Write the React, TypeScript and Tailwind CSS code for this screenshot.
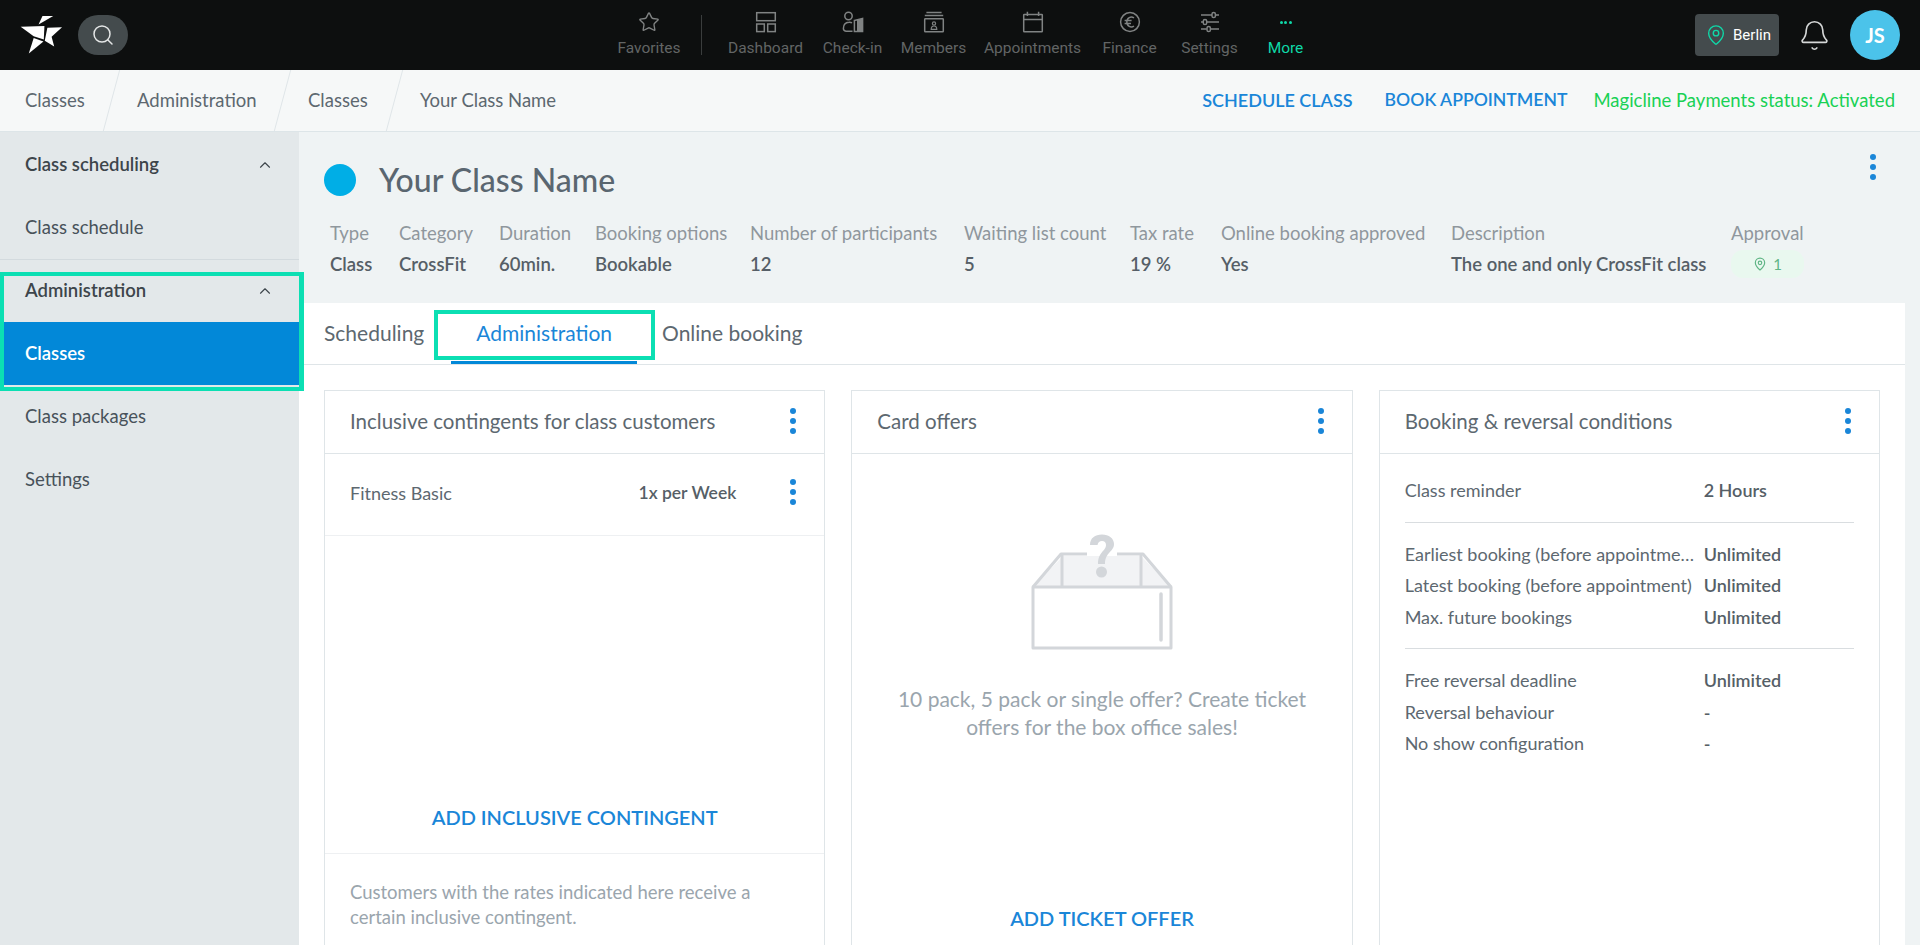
import { ChevronUp, Search, Star, Bell, MapPin } from "lucide-react";

const SANS = "font-['Lato','Noto_Sans',sans-serif]";

function Logo() {
  return (
    <svg width="43" height="40" viewBox="28 30 132 120" fill="#fff">
      <polygon points="97,32 130,32 85,58" />
      <polygon points="30,65 103,62 101,104 70,94" />
      <polygon points="70,99 100,110 55,147" />
      <polygon points="112,68 157,66 125,95 133,125 104,108" />
    </svg>
  );
}

function DashboardIcon() {
  return (
    <svg width="22" height="22" viewBox="0 0 22 22" fill="none" stroke="currentColor" strokeWidth="1.5">
      <rect x="1.7" y="1.7" width="18.6" height="8" />
      <rect x="1.7" y="13" width="7.6" height="7.6" />
      <rect x="12.7" y="13" width="7.6" height="7.6" />
    </svg>
  );
}

function CheckInIcon() {
  return (
    <svg width="22" height="22" viewBox="0 0 22 22" fill="none" stroke="currentColor" strokeWidth="1.5">
      <circle cx="6.5" cy="5" r="3.7" />
      <path d="M10.5 20.2H4.2C2.6 20.2 1.4 19 1.4 17.4C1.4 14 3.6 11.5 7 11.3C8.2 11.2 9.2 11.4 10 11.9" />
      <path d="M12.4 9.4L20.6 7.4V20.6H12.4Z" />
      <path d="M15 9V20.6H20.6V7.4Z" fill="currentColor" stroke="none" />
    </svg>
  );
}

function MembersIcon() {
  return (
    <svg width="22" height="22" viewBox="0 0 22 22" fill="none" stroke="currentColor" strokeWidth="1.5">
      <path d="M3.4 1.4H18.6M1.8 4.6H20.2" />
      <rect x="1.7" y="7.8" width="18.6" height="13" rx="0.6" />
      <circle cx="11" cy="12.4" r="1.6" strokeWidth="1.2" />
      <path d="M8.2 18.4C8.2 16.4 9.4 15 11 15C12.6 15 13.8 16.4 13.8 18.4Z" strokeWidth="1.2" />
    </svg>
  );
}

function CalendarIcon() {
  return (
    <svg width="22" height="22" viewBox="0 0 22 22" fill="none" stroke="currentColor" strokeWidth="1.5">
      <rect x="1.7" y="3.4" width="18.6" height="17.4" rx="0.6" />
      <path d="M1.7 8.4H20.3M5.4 0.8V5M16.6 0.8V5" />
    </svg>
  );
}

function FinanceIcon() {
  return (
    <svg width="22" height="22" viewBox="0 0 22 22" fill="none" stroke="currentColor" strokeWidth="1.5">
      <circle cx="11" cy="11" r="9.4" />
      <path d="M15 6.9C12 5 7.8 6.6 7.8 11C7.8 15.4 12 17 15 15.1M5.6 9.6H12.6M5.6 12.4H12" />
    </svg>
  );
}

function SlidersIcon() {
  return (
    <svg width="22" height="22" viewBox="0 0 22 22" fill="none" stroke="currentColor" strokeWidth="1.5">
      <path d="M2 4H13M17 4H20M2 11H4M8 11H20M2 18H7.5M11.5 18H20" />
      <rect x="13" y="1.4" width="3.4" height="5.2" rx="1.7" />
      <rect x="4.3" y="8.4" width="3.4" height="5.2" rx="1.7" />
      <rect x="8" y="15.4" width="3.4" height="5.2" rx="1.7" />
    </svg>
  );
}

const NAV = [
  { label: "Dashboard", width: "w-[91px]", icon: <DashboardIcon /> },
  { label: "Check-in", width: "w-[83px]", icon: <CheckInIcon /> },
  { label: "Members", width: "w-[79px]", icon: <MembersIcon /> },
  { label: "Appointments", width: "w-[119px]", icon: <CalendarIcon /> },
  { label: "Finance", width: "w-[75px]", icon: <FinanceIcon /> },
  { label: "Settings", width: "w-[85px]", icon: <SlidersIcon /> },
];

function NavItem({ label, width, icon }: { label: string; width: string; icon: React.ReactNode }) {
  return (
    <div className={`${width} flex flex-col items-center`}>
      <div className="h-[24px] flex items-center text-[#808383]">{icon}</div>
      <span className="mt-[4px] font-['Roboto',sans-serif] text-[15.5px] leading-[20px] text-[#626565]">{label}</span>
    </div>
  );
}

function TopBar() {
  return (
    <header className="h-[70px] bg-[#0d0f0f] flex items-center pl-[20px] pr-[20px]">
      <Logo />
      <div className="ml-[15px] w-[50px] h-[40px] rounded-full bg-[#444b4d] flex items-center justify-center text-[#e4e6e6]">
        <Search size={24} strokeWidth={1.5} />
      </div>
      <nav className="ml-[481px] flex items-start pt-[10px] self-stretch">
        <NavItem label="Favorites" width="w-[80px]" icon={<Star size={22} strokeWidth={1.5} />} />
        <div className="mx-[12px] mt-[5px] w-px h-[40px] bg-[#3a3d3d]" />
        <div className="ml-[6px] flex">
          {NAV.map((n) => (
            <NavItem key={n.label} {...n} />
          ))}
          <div className="w-[67px] flex flex-col items-center">
            <div className="h-[24px] flex items-center gap-[1.5px]">
              <span className="w-[3px] h-[3px] rounded-full bg-[#0fd8a8]" />
              <span className="w-[3px] h-[3px] rounded-full bg-[#0fd8a8]" />
              <span className="w-[3px] h-[3px] rounded-full bg-[#0fd8a8]" />
            </div>
            <span className="mt-[4px] font-['Roboto',sans-serif] text-[15.5px] leading-[20px] text-[#0fd8a8]">More</span>
          </div>
        </div>
      </nav>
      <div className="ml-auto flex items-center">
        <div className="w-[84px] h-[42px] rounded-[4px] bg-[#444b4d] flex items-center pl-[10px] gap-[6px]">
          <MapPin size={22} strokeWidth={1.5} className="text-[#0fd8a8]" />
          <span className="font-['Roboto',sans-serif] text-[15px] text-white">Berlin</span>
        </div>
        <Bell size={33} strokeWidth={1.2} className="ml-[19px] text-[#d5d7d7]" />
        <div className="ml-[19px] w-[50px] h-[50px] rounded-full bg-[#4bc3ea] flex items-center justify-center text-white font-bold text-[20px]">
          JS
        </div>
      </div>
    </header>
  );
}

function Crumb({ label, width, last }: { label: string; width: string; last?: boolean }) {
  return (
    <>
      <span className={`${width} text-[18.5px] text-[#5d6870] whitespace-nowrap`}>{label}</span>
      {!last && <span className="w-px h-[61px] bg-[#dfe5e8] -skew-x-[15deg]" />}
    </>
  );
}

function BreadcrumbBar() {
  return (
    <div className="h-[62px] border-b border-[#dde5e8] bg-[#f6f8f8] flex items-center pl-[25px] pr-[25px]">
      <Crumb label="Classes" width="w-[86px]" />
      <span className="w-[25px]" />
      <Crumb label="Administration" width="w-[145px]" />
      <span className="w-[25px]" />
      <Crumb label="Classes" width="w-[86px]" />
      <span className="w-[25px]" />
      <Crumb label="Your Class Name" width="w-[160px]" last />
      <div className="ml-auto flex items-center font-semibold text-[18px]">
        <span className="text-[#1a86d8]">SCHEDULE CLASS</span>
        <span className="ml-[32px] text-[17.6px] text-[#1a86d8]">BOOK APPOINTMENT</span>
        <span className="ml-[26px] text-[18.5px] font-normal text-[#19d155]">Magicline Payments status: Activated</span>
      </div>
    </div>
  );
}

function SideGroup({ label }: { label: string }) {
  return (
    <div className="h-[63px] pl-[25px] pr-[25px] flex items-center justify-between font-semibold text-[18.5px] text-[#3d454b]">
      {label}
      <ChevronUp size={18} strokeWidth={1.5} />
    </div>
  );
}

function SideItem({ label, active }: { label: string; active?: boolean }) {
  return (
    <div
      className={`h-[63px] pl-[25px] flex items-center text-[18.5px] ${
        active ? "bg-[#0288d8] text-white font-semibold" : "text-[#48525a]"
      }`}
    >
      {label}
    </div>
  );
}

function Sidebar() {
  return (
    <aside className="relative w-[299px] shrink-0 bg-[#e3e8ea] pt-[1px]">
      <SideGroup label="Class scheduling" />
      <SideItem label="Class schedule" />
      <div className="h-px bg-[#d3dade]" />
      <div className="-mt-px">
        <SideGroup label="Administration" />
      </div>
      <SideItem label="Classes" active />
      <SideItem label="Class packages" />
      <SideItem label="Settings" />
      <div className="absolute left-0 top-[140px] w-[304px] h-[119px] border-4 border-r-[5px] border-[#0cdfb3] z-10" />
    </aside>
  );
}

const META = [
  { label: "Type", value: "Class" },
  { label: "Category", value: "CrossFit" },
  { label: "Duration", value: "60min." },
  { label: "Booking options", value: "Bookable" },
  { label: "Number of participants", value: "12" },
  { label: "Waiting list count", value: "5" },
  { label: "Tax rate", value: "19 %" },
  { label: "Online booking approved", value: "Yes" },
  { label: "Description", value: "The one and only CrossFit class" },
];

function Kebab() {
  return (
    <div className="flex flex-col gap-[4px]">
      <span className="w-[6px] h-[6px] rounded-full bg-[#1a86d8]" />
      <span className="w-[6px] h-[6px] rounded-full bg-[#1a86d8]" />
      <span className="w-[6px] h-[6px] rounded-full bg-[#1a86d8]" />
    </div>
  );
}

function ClassHeader() {
  return (
    <div className="h-[171px] pl-[25px] pr-[29px] pt-[31px]">
      <div className="flex items-center">
        <span className="w-[32px] h-[32px] rounded-full bg-[#00aee6]" />
        <h1 className="ml-[23px] text-[32px] leading-[34px] font-medium text-[#5a6670]">Your Class Name</h1>
        <div className="ml-auto -mt-[26px]">
          <Kebab />
        </div>
      </div>
      <div className="mt-[21px] ml-[6px] grid grid-cols-[69px_100px_96px_155px_214px_166px_91px_230px_280px_auto] text-[18.5px]">
        {META.map((m) => (
          <div key={m.label}>
            <div className="h-[31px] leading-[31px] text-[#8f979d] whitespace-nowrap">{m.label}</div>
            <div className="h-[31px] leading-[31px] font-semibold text-[#565f67] whitespace-nowrap">{m.value}</div>
          </div>
        ))}
        <div>
          <div className="h-[31px] leading-[31px] text-[#8f979d]">Approval</div>
          <div className="mt-[1px] w-[73px] h-[28px] rounded-[12px] bg-[#e9f8ef] flex items-center justify-center gap-[6px] text-[15px] text-[#5fb585]">
            <MapPin size={14} strokeWidth={2} />1
          </div>
        </div>
      </div>
    </div>
  );
}

function Tabs() {
  return (
    <div className="h-[62px] border-b border-[#dfe5e8] flex pl-[25px] text-[21px]">
      <div className="pr-[27px] pb-[2px] flex items-center text-[#5d6870]">Scheduling</div>
      <div className="relative px-[25px] flex items-center text-[#1a86d8] border-b-[3px] border-[#0288d8]">
        <span className="pt-[1px]">Administration</span>
        <div className="absolute -left-[17px] -right-[18px] top-[7px] h-[50px] border-4 border-[#0cdfb3]" />
      </div>
      <div className="pl-[25px] pb-[2px] flex items-center text-[#5d6870]">Online booking</div>
    </div>
  );
}

function Card({ title, children }: { title: string; children: React.ReactNode }) {
  return (
    <div className="border border-[#dfe5e8] h-[600px] flex flex-col">
      <div className="h-[63px] shrink-0 border-b border-[#dfe5e8] pl-[25px] pr-[28px] pb-[1px] flex items-center justify-between text-[20.5px] text-[#5d6870]">
        {title}
        <div className="mb-[2px]">
          <Kebab />
        </div>
      </div>
      {children}
    </div>
  );
}

function EmptyBox() {
  return (
    <svg width="142" height="118" viewBox="0 0 142 118" fill="none" stroke="#d3d6da" strokeWidth="3">
      <path d="M32 24H110V55H32Z" fill="#f2f3f5" stroke="none" />
      <path d="M2 55L32 24V55Z M140 55L110 24V55Z" fill="#f2f3f5" stroke="none" />
      <path d="M2 55L30 22H56M86 22H112L140 55" strokeLinejoin="round" />
      <path d="M31 22V55M110 22V55" />
      <rect x="2" y="55" width="138" height="61" strokeLinejoin="round" />
      <path d="M130 62V108" strokeWidth="3.5" strokeLinecap="round" />
      <path
        d="M59 13C59 6 64 2.5 71 2.5C78 2.5 83 6.5 83 12C83 20 74 20 74 32H67C67 20 75 19 75 13C75 10.5 73.5 9 71 9C68.5 9 67 10.5 66.5 13Z"
        fill="#d3d6da"
        stroke="none"
      />
      <circle cx="70.5" cy="40" r="5.5" fill="#d3d6da" stroke="none" />
    </svg>
  );
}

const CONDITIONS = [
  [{ label: "Class reminder", value: "2 Hours" }],
  [
    { label: "Earliest booking (before appointment)", value: "Unlimited" },
    { label: "Latest booking (before appointment)", value: "Unlimited" },
    { label: "Max. future bookings", value: "Unlimited" },
  ],
  [
    { label: "Free reversal deadline", value: "Unlimited" },
    { label: "Reversal behaviour", value: "-" },
    { label: "No show configuration", value: "-" },
  ],
];

function Cards() {
  return (
    <div className="px-[25px] pt-[25px] grid grid-cols-3 gap-[26px] text-[18px]">
      <Card title="Inclusive contingents for class customers">
        <div className="h-[83px] border-b border-[#eef0f2] pl-[25px] pr-[28px] flex items-center justify-between -mt-px">
          <span className="mb-[2px] text-[#5d6870]">Fitness Basic</span>
          <div className="flex items-center gap-[54px]">
            <span className="mb-[2px] font-semibold text-[17.5px] text-[#565f67]">1x per Week</span>
            <div className="mb-[4px]">
              <Kebab />
            </div>
          </div>
        </div>
        <div className="h-[318px] border-b border-[#eef0f2] flex items-end justify-center pb-[21px]">
          <span className="font-semibold text-[20px] text-[#1a86d8]">ADD INCLUSIVE CONTINGENT</span>
        </div>
        <p className="px-[25px] pt-[26px] text-[18.5px] leading-[25px] text-[#9aa5ad]">
          Customers with the rates indicated here receive a certain inclusive contingent.
        </p>
      </Card>
      <Card title="Card offers">
        <div className="flex flex-col items-center pt-[78px]">
          <EmptyBox />
          <p className="mt-[35px] w-[430px] text-center text-[21px] leading-[28px] text-[#9aa5ad]">
            10 pack, 5 pack or single offer? Create ticket offers for the box office sales!
          </p>
          <span className="mt-[162px] font-semibold text-[20px] text-[#1a86d8]">ADD TICKET OFFER</span>
        </div>
      </Card>
      <Card title="Booking & reversal conditions">
        <div className="px-[25px] pt-[21px]">
          {CONDITIONS.map((group, i) => (
            <div key={i} className={i > 0 ? "border-t border-[#d9dde0] mt-[15px] pt-[16px]" : ""}>
              {group.map((row) => (
                <div key={row.label} className="h-[31.5px] flex items-center">
                  <span className="w-[299px] shrink-0 truncate pr-[6px] text-[#5d6870]">{row.label}</span>
                  <span className="font-semibold text-[#565f67]">{row.value}</span>
                </div>
              ))}
            </div>
          ))}
        </div>
      </Card>
    </div>
  );
}

export default function App() {
  return (
    <div className={`h-[945px] overflow-hidden flex flex-col ${SANS}`}>
      <TopBar />
      <BreadcrumbBar />
      <div className="flex-1 flex min-h-0">
        <Sidebar />
        <main className="flex-1 bg-[#eff3f4] pr-[15px] min-w-0">
          <ClassHeader />
          <div className="bg-white h-full">
            <Tabs />
            <Cards />
          </div>
        </main>
      </div>
    </div>
  );
}
